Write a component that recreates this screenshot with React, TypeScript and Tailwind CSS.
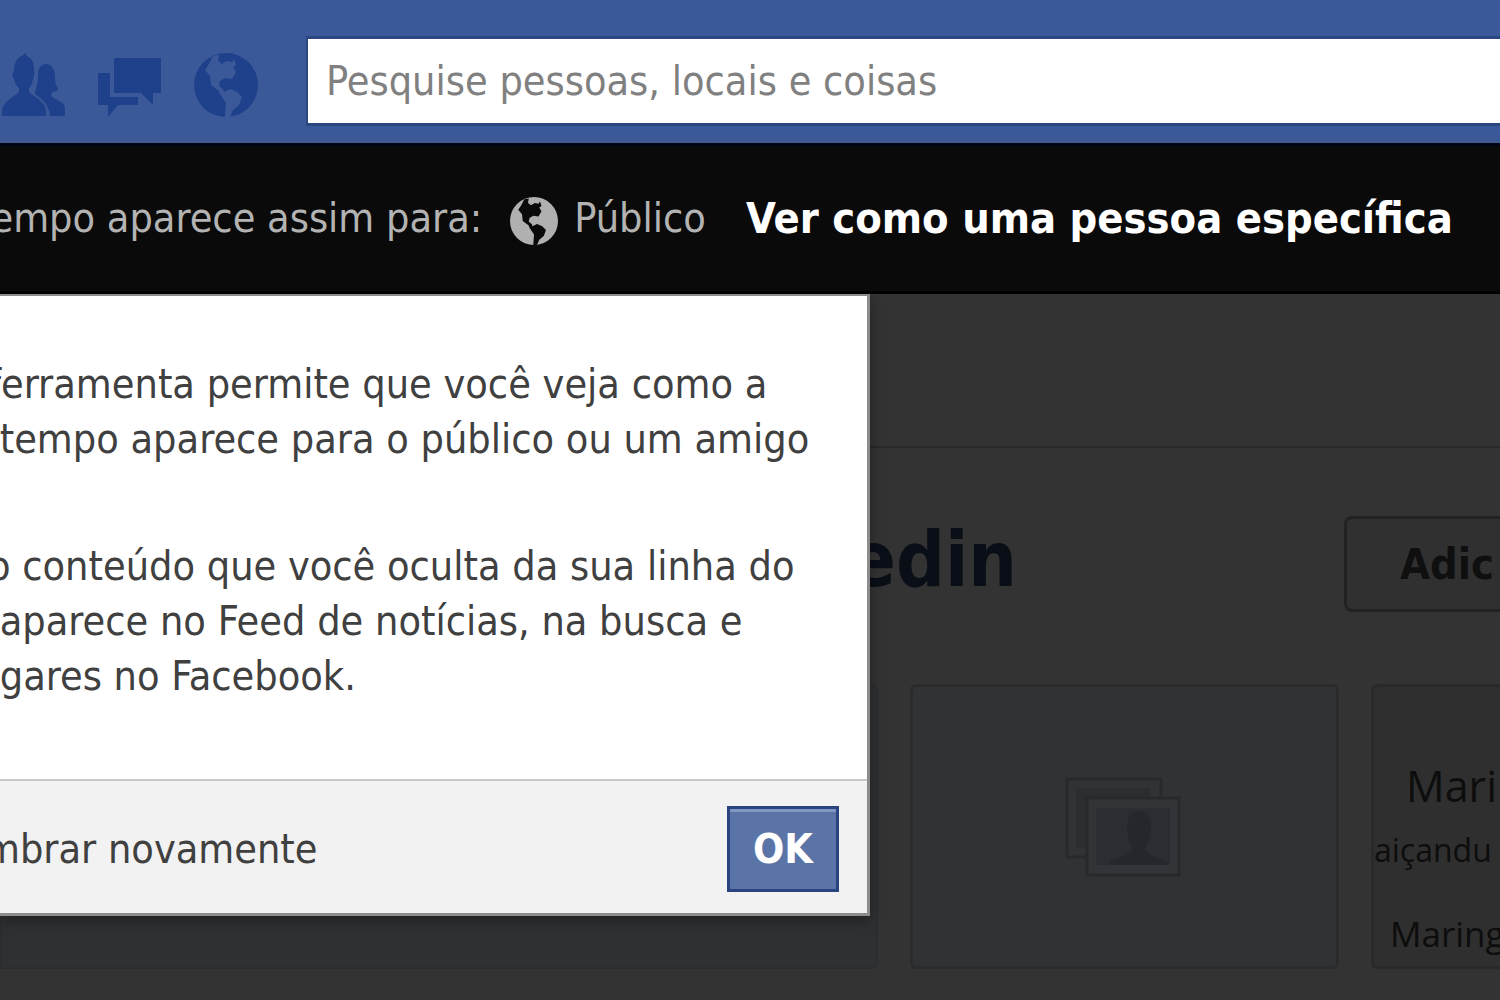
const sans = "font-['DejaVu_Sans_Condensed','DejaVu_Sans',sans-serif]"

const messageLines = [
  ['ferramenta permite que você veja como a', ' tempo aparece para o público ou um amigo'],
  ['o conteúdo que você oculta da sua linha do', ' aparece no Feed de notícias, na busca e', ' gares no Facebook.'],
]

function FriendsIcon() {
  return (
    <svg viewBox="0 0 64 64" className="h-16 w-16" fill="#1f418c" aria-hidden="true">
      <path d="M36 22c0-7 3-11 8-11s8 4 9 11c0 6 0 9 3 13 0 3-3 4-6 4l-1 4c5 4 14 6 14 12v8H48c0-9-7-14-15-20v-5c2-4 3-10 3-16z" />
      <path
        stroke="#3b5998"
        strokeWidth="4"
        paintOrder="stroke"
        d="M12 18C12 9 16 4 20 3l3-3 3 4c4 1 6 6 6 13 1 3 0 7-1 9-1 5-2 7-4 9v4c6 5 17 11 17 18v6H0v-6c1-8 11-13 17-18v-4c-3-2-4-5-5-9-2-2-2-6 0-8z"
      />
    </svg>
  )
}

function MessagesIcon() {
  return (
    <svg viewBox="0 0 64 64" className="h-16 w-16" fill="#1f418c" aria-hidden="true">
      <path d="M16 5h47v35h-8v12L43 40H16z" />
      <path d="M0 20h12v24h28v8H20L10 64V52H0z" />
    </svg>
  )
}

interface GlobeProps {
  className: string
  fill: string
  land: string
}

function GlobeIcon({ className, fill, land }: GlobeProps) {
  return (
    <svg viewBox="0 0 64 64" className={className} aria-hidden="true">
      <circle cx="32" cy="32" r="32" fill={fill} />
      <path
        fill={land}
        d="M19 3l6-1-1 6 4 3 5-3 5 1 2-3 2 6-3 2 3 5-4 7-7-1-5 3-1 5 4 3 1 3 6-3 7 3 5 5-3 8-6 5-3 7h-5l1-14-6-9-1-3-8-6-1-9-5-6 4-6z"
      />
    </svg>
  )
}

function AlbumIcon() {
  return (
    <svg viewBox="0 0 116 100" className="mr-1 h-25 w-29" aria-hidden="true">
      <rect x="2" y="2" width="94" height="78" fill="#303235" stroke="#27292b" strokeWidth="3" />
      <rect x="11" y="11" width="74" height="60" fill="#2b2d2f" />
      <rect x="22" y="21" width="92" height="77" fill="#323437" stroke="#27292c" strokeWidth="3" />
      <rect x="31" y="31" width="74" height="57" fill="#2b2d32" />
      <path fill="#26272d" d="M74 34c8 0 12 7 12 16 0 11-4 16-6 21 1 8 16 9 22 14v3H44v-3c8-5 22-6 24-14-3-5-6-11-6-20 0-10 4-17 12-17z" />
    </svg>
  )
}

function TopBar() {
  return (
    <header className="flex h-[143px] items-start overflow-hidden border-b-2 border-[#405a8f] bg-[#3b5998]">
      <nav className="flex shrink-0 items-center gap-8 pt-[53px] pl-0.5">
        <button aria-label="Solicitações de amizade"><FriendsIcon /></button>
        <button aria-label="Mensagens"><MessagesIcon /></button>
        <button aria-label="Notificações">
          <GlobeIcon className="h-16 w-16" fill="#1f418c" land="#3b5998" />
        </button>
      </nav>
      <input
        type="search"
        aria-label="Pesquisar"
        placeholder="Pesquise pessoas, locais e coisas"
        className="mt-9 ml-12 h-[90px] min-w-0 flex-1 border-y-3 border-l-2 border-[#2a4781] bg-white px-[18px] text-[41px] text-gray-700 outline-none placeholder:text-[#808080]"
      />
    </header>
  )
}

function ViewAsBar() {
  return (
    <div className="flex h-[151px] items-center overflow-hidden border-y-3 border-t-[#000414] border-b-black bg-[#0a0a0a] text-[41px] whitespace-nowrap text-[#b3b3b3]">
      <span className="-ml-6">tempo aparece assim para:</span>
      <GlobeIcon className="mt-1 ml-7 h-12 w-12 shrink-0" fill="#b0b0b0" land="#0a0a0a" />
      <span className="ml-4">Público</span>
      <a href="#" className="ml-10 text-[43px] font-bold text-white">Ver como uma pessoa específica</a>
    </div>
  )
}

function InfoDialog() {
  return (
    <div
      role="dialog"
      aria-label="Ver como"
      className="absolute top-0 left-0 w-[870px] overflow-hidden border-t-2 border-r-3 border-b-3 border-[#8c8c8c] bg-white text-[41px] leading-[55px] text-[#404040] shadow-[0_4px_14px_rgba(0,0,0,0.35)]"
    >
      <div className="-ml-3 flex h-[483px] flex-col gap-[72px] pt-[61px] whitespace-pre">
        {messageLines.map((lines) => (
          <p key={lines[0]}>
            {lines.map((line) => (
              <span key={line} className="block">{line}</span>
            ))}
          </p>
        ))}
      </div>
      <div className="flex h-[134px] items-center justify-between border-t-2 border-[#c8c8c8] bg-[#f2f2f2] pt-1 pr-7">
        <span className="-ml-4">mbrar novamente</span>
        <button className="h-[86px] w-28 border-3 border-[#29447e] bg-[#5b74a8] font-bold text-white shadow-[inset_0_3px_0_#8296c2]">
          OK
        </button>
      </div>
    </div>
  )
}

function Timeline() {
  return (
    <main className="relative h-[706px] overflow-hidden bg-[#333333]">
      <div className="h-[154px] border-b-2 border-[#292929]" />
      <div className="flex h-[236px] items-start justify-between pt-[68px]">
        <h1 className="w-[1017px] pt-1 text-right text-[76px] leading-20 font-bold text-[#0a0e17]">edin</h1>
        <button className="h-24 w-[156px] overflow-hidden rounded-l-lg border-y-3 border-l-3 border-[#222222] bg-[#303030] pl-[53px] text-left text-[43px] font-bold text-[#0f0f0f]">
          Adic
        </button>
      </div>
      <div className="flex h-[285px] gap-8">
        <div className="w-[878px] shrink-0 rounded-r-md border-2 border-[#2b2d2f] bg-[#2e3032]" />
        <div className="flex w-[429px] shrink-0 items-center justify-center rounded-md border-3 border-[#292b2d] bg-[#303234]">
          <AlbumIcon />
        </div>
        <div className="min-w-0 flex-1 overflow-hidden rounded-l-md border-y-3 border-l-3 border-[#292929] bg-[#2f2f2f] font-['Open_Sans','Noto_Sans',sans-serif] whitespace-nowrap text-[#0d0d0d]">
          <p className="pt-[71px] pl-8 text-[43px] leading-14">Mari</p>
          <p className="pt-3 text-[32px] leading-12">aiçandu</p>
          <p className="pt-9 pl-4 text-[35px] leading-12">Maring</p>
        </div>
      </div>
      <InfoDialog />
    </main>
  )
}

export default function App() {
  return (
    <div className={`min-h-screen overflow-hidden bg-[#333333] ${sans}`}>
      <TopBar />
      <ViewAsBar />
      <Timeline />
    </div>
  )
}
